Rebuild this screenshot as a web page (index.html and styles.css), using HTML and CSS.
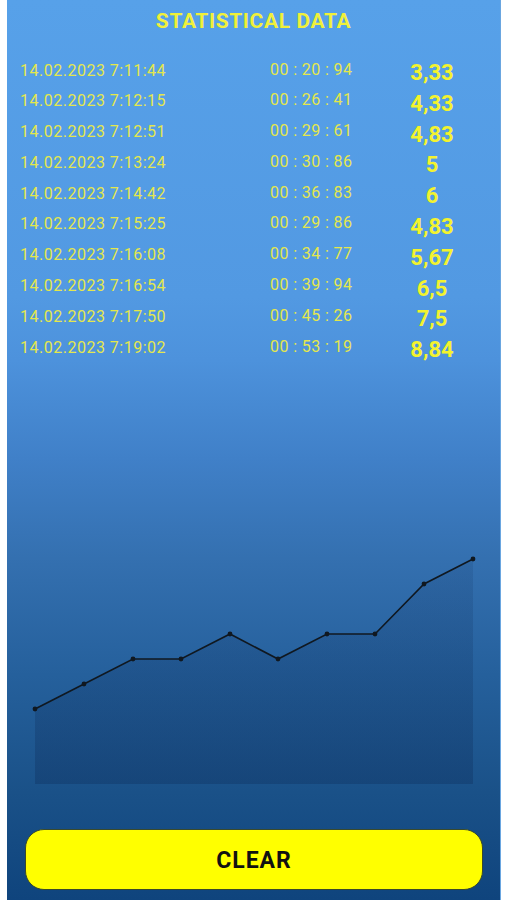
FILE: index.html
```html
<!DOCTYPE html>
<html lang="en">

<head>
  <meta charset="UTF-8">
  <meta name="viewport" content="width=device-width, initial-scale=1.0">
  <title>Statistical Data</title>
  <link rel="stylesheet" href="styles.css">
</head>

<body>
  <div class="screen">
    <h1 class="title">STATISTICAL DATA</h1>

    <div class="results">
      <div class="row"><span class="date">14.02.2023 7:11:44</span><span class="time">00 : 20 : 94</span><span class="score">3,33</span></div>
      <div class="row"><span class="date">14.02.2023 7:12:15</span><span class="time">00 : 26 : 41</span><span class="score">4,33</span></div>
      <div class="row"><span class="date">14.02.2023 7:12:51</span><span class="time">00 : 29 : 61</span><span class="score">4,83</span></div>
      <div class="row"><span class="date">14.02.2023 7:13:24</span><span class="time">00 : 30 : 86</span><span class="score">5</span></div>
      <div class="row"><span class="date">14.02.2023 7:14:42</span><span class="time">00 : 36 : 83</span><span class="score">6</span></div>
      <div class="row"><span class="date">14.02.2023 7:15:25</span><span class="time">00 : 29 : 86</span><span class="score">4,83</span></div>
      <div class="row"><span class="date">14.02.2023 7:16:08</span><span class="time">00 : 34 : 77</span><span class="score">5,67</span></div>
      <div class="row"><span class="date">14.02.2023 7:16:54</span><span class="time">00 : 39 : 94</span><span class="score">6,5</span></div>
      <div class="row"><span class="date">14.02.2023 7:17:50</span><span class="time">00 : 45 : 26</span><span class="score">7,5</span></div>
      <div class="row"><span class="date">14.02.2023 7:19:02</span><span class="time">00 : 53 : 19</span><span class="score">8,84</span></div>
    </div>

    <!-- progress chart -->
    <svg class="chart" width="494" height="250" viewBox="0 0 494 250">
      <defs>
        <linearGradient id="areaFill" x1="0" y1="0" x2="0" y2="1">
          <stop offset="0" stop-color="#0a2550" stop-opacity="0.12"/>
          <stop offset="1" stop-color="#0a2550" stop-opacity="0.28"/>
        </linearGradient>
      </defs>
      <polygon fill="url(#areaFill)" points="28,244 28,169 77,144 126,119 174,119 223,94 271,119 320,94 368,94 417,44 466,19 466,244"/>
      <polyline fill="none" stroke="#101820" stroke-width="1.6" points="28,169 77,144 126,119 174,119 223,94 271,119 320,94 368,94 417,44 466,19"/>
      <g fill="#101820">
        <circle cx="28" cy="169" r="2.4"/>
        <circle cx="77" cy="144" r="2.4"/>
        <circle cx="126" cy="119" r="2.4"/>
        <circle cx="174" cy="119" r="2.4"/>
        <circle cx="223" cy="94" r="2.4"/>
        <circle cx="271" cy="119" r="2.4"/>
        <circle cx="320" cy="94" r="2.4"/>
        <circle cx="368" cy="94" r="2.4"/>
        <circle cx="417" cy="44" r="2.4"/>
        <circle cx="466" cy="19" r="2.4"/>
      </g>
    </svg>

    <button class="clear-btn">CLEAR</button>
  </div>
</body>

</html>
```

FILE: styles.css
```css
body {
  font-family: Roboto, "Liberation Sans", sans-serif;
  margin: 0;
  padding: 0 5px 0 7px;
  background-color: #fff;
}

.screen {
  height: 900px;
  box-sizing: border-box;
  background: linear-gradient(#57a1e9 0%, #5299e2 33%, #4d92dc 40%, #4080c8 51%, #3470b0 62%, #25609c 75%, #1a5188 88%, #0f447d 100%);
  border-right: 1px solid #6aa6e0;
  display: flex;
  flex-direction: column;
}

.title {
  margin: 0;
  padding-top: 9px;
  font-size: 21px;
  line-height: 24px;
  letter-spacing: 0.6px;
  font-weight: bold;
  text-align: center;
  color: #f0f03a;
}

.results {
  margin-top: 21px;
  padding-left: 13px;
}

.row {
  display: grid;
  grid-template-columns: 250px 120px 84px;
  align-items: center;
  height: 30.8px;
}

.date,
.time {
  font-size: 16px;
  line-height: 19px;
  color: #e4e74c;
}

.date {
  letter-spacing: 0.5px;
}

.time {
  letter-spacing: 0.4px;
  margin-bottom: 2px;
}

.score {
  font-size: 22px;
  line-height: 26px;
  font-weight: bold;
  text-align: center;
  color: #f3f32e;
  margin-top: 6px;
}

.chart {
  display: block;
  margin-top: 178px;
}

.clear-btn {
  display: block;
  margin: 39px 17px 0 18px;
  padding-top: 3px;
  height: 61px;
  background-color: #ffff00;
  border: 1px solid #3a4a2a;
  border-radius: 19px;
  font-family: Roboto, "Liberation Sans", sans-serif;
  font-size: 23px;
  letter-spacing: 1px;
  font-weight: bold;
  color: #111;
  cursor: pointer;
}
```
